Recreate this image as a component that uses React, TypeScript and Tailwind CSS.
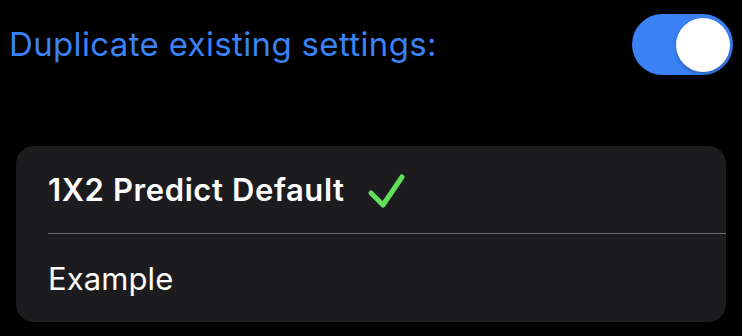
export default function App() {
  return (
    <div className="w-[742px] h-[336px] bg-black font-['Inter','Noto_Sans',sans-serif] overflow-hidden">
      {/* Header row with toggle */}
      <div className="flex items-center justify-between pl-[9px] pr-[9px] pt-[14px]">
        <span className="text-[33px] leading-none text-[#3b82f6] tracking-[0.35px]">
          Duplicate existing settings:
        </span>
        <div className="w-[101px] h-[61px] rounded-full bg-[#3a82f6] flex items-center justify-end pr-[3px]">
          <div className="w-[54px] h-[54px] rounded-full bg-white shadow-[0_2px_4px_rgba(0,0,0,0.25)]" />
        </div>
      </div>

      {/* Settings list */}
      <div className="mx-[16px] mt-[71px] rounded-[18px] bg-[#1c1c1e]">
        <div className="h-[87px] flex items-center pl-[32px] gap-[22px]">
          <span className="text-[31px] leading-none font-semibold text-white tracking-[0.6px]">
            1X2 Predict Default
          </span>
          <svg width="40" height="40" viewBox="0 0 40 40" className="mt-[5px]">
            <path
              d="M4 21 L16 33 L35 5"
              fill="none"
              stroke="#5ee05a"
              strokeWidth="5"
              strokeLinecap="round"
              strokeLinejoin="round"
            />
          </svg>
        </div>
        <div className="ml-[32px] h-px bg-[#6a6a6c]" />
        <div className="h-[88px] flex items-center pl-[32px]">
          <span className="text-[31px] leading-none text-white tracking-[0.1px]">Example</span>
        </div>
      </div>
    </div>
  );
}
